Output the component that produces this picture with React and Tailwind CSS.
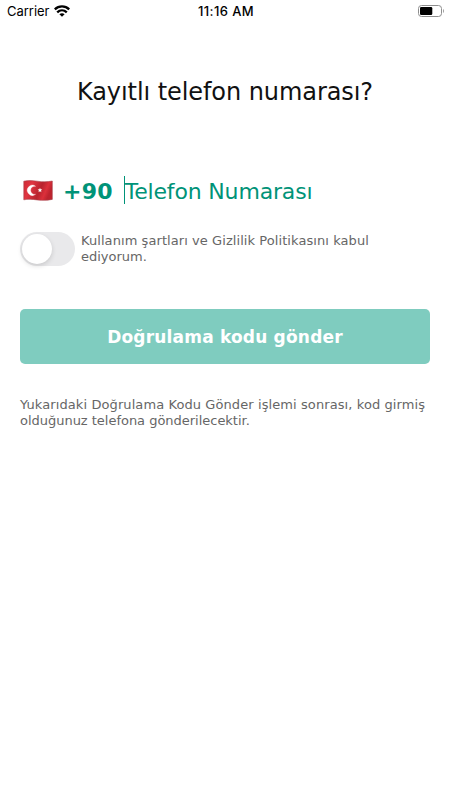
import React from 'react';

const WifiIcon = () => (
    <svg className="w-4 h-3" viewBox="0 0 16 12" fill="none" stroke="#000" strokeWidth="2.3">
        <path d="M0.8 4.4C4.8 0.4 11.2 0.4 15.2 4.4" />
        <path d="M3.2 7.4C6 4.7 10 4.7 12.8 7.4" />
        <path d="M8 11.8L5.4 9.3C6.9 7.9 9.1 7.9 10.6 9.3Z" fill="#000" stroke="none" />
    </svg>
);

const BatteryIcon = () => (
    <svg className="w-[27px] h-3" viewBox="0 0 27 12" fill="none">
        <rect x="0.5" y="0.5" width="23" height="11" rx="3" stroke="#8e8e8e" />
        <rect x="2" y="2" width="12.3" height="8" rx="1.3" fill="#000" />
        <path d="M25 4V8C26.2 7.6 26.2 4.4 25 4Z" fill="#8e8e8e" />
    </svg>
);

const TurkeyFlag = () => (
    <svg className="w-[30px] h-[22px]" viewBox="0 0 30 22">
        <defs>
            <linearGradient id="cloth" x1="0" x2="1" y1="0" y2="0.3">
                <stop offset="0" stopColor="#cf2a35" />
                <stop offset="0.3" stopColor="#e03642" />
                <stop offset="0.65" stopColor="#b8232e" />
                <stop offset="0.85" stopColor="#dc303b" />
                <stop offset="1" stopColor="#bd232e" />
            </linearGradient>
        </defs>
        <path
            d="M0.8 1.2C5 0.3 9 0.5 14 1.2C20 2.1 24 2 29.3 1V19.4C24 20.4 20 20.6 14 19.9C9 19.2 5 19 0.8 19.8Z"
            fill="url(#cloth)"
            stroke="#a6404a"
            strokeWidth="0.6"
        />
        <path
            d="M12.6 6.3A5.1 5.1 0 1 0 12.6 14.3A4.1 4.1 0 1 1 12.6 6.3Z"
            fill="#fff"
            stroke="#fff"
            strokeWidth="0.3"
        />
        <path
            d="M17 7.7L17.6 9.3L19.3 9.4L18 10.5L18.4 12.2L17 11.3L15.5 12.2L15.9 10.5L14.6 9.4L16.4 9.3Z"
            fill="#fff"
        />
    </svg>
);

const App = () => {
    return (
        <div className="min-h-screen bg-white font-['DejaVu_Sans',sans-serif]">
            {/* Status Bar */}
            <div className="grid grid-cols-3 items-center h-[22px] pl-[7px] pr-[5px] font-['Inter',sans-serif] text-black">
                <div className="flex items-center gap-[5px]">
                    <span className="pt-px text-[13px] tracking-[-0.02px]">Carrier</span>
                    <WifiIcon />
                </div>
                <span className="pt-px text-center text-[13px] font-medium tracking-[0.4px]">11:16 AM</span>
                <div className="flex justify-end">
                    <BatteryIcon />
                </div>
            </div>

            <div className="px-5">
                <h1 className="mt-[54px] text-center text-2xl tracking-[-0.07px] text-[#111] whitespace-nowrap">
                    Kayıtlı telefon numarası?
                </h1>

                {/* Phone Input */}
                <div className="flex items-center h-8 mt-[67px] pl-[3px] text-[#009378]">
                    <TurkeyFlag />
                    <span className="ml-[10px] text-[22px] font-bold tracking-[0.2px]">+90</span>
                    <span className="ml-[11px] mb-[2px] w-px h-7 bg-[#009378]" />
                    <span className="text-[22px] tracking-[-0.17px] whitespace-nowrap">Telefon Numarası</span>
                </div>

                {/* Terms Switch */}
                <div className="flex mt-[25px]">
                    <div className="w-[55px] h-[34px] p-[2px] shrink-0 rounded-full bg-[#e9e9eb]">
                        <div className="size-[30px] rounded-full bg-white shadow-[0_2px_5px_rgba(0,0,0,0.14)]" />
                    </div>
                    <p className="ml-[6px] mt-px text-[13px] leading-4 text-[#666] whitespace-nowrap">
                        <span className="tracking-[0.07px]">Kullanım şartları ve Gizlilik Politikasını kabul</span>
                        <br />
                        ediyorum.
                    </p>
                </div>

                <button className="block w-full h-[55px] pt-[2px] mt-[43px] rounded-[5px] bg-[#7fccbf] text-[17px] font-bold tracking-[0.19px] text-white">
                    Doğrulama kodu gönder
                </button>

                <p className="mt-[33px] text-[13px] leading-4 text-[#666] whitespace-nowrap">
                    <span className="tracking-[0.09px]">
                        Yukarıdaki Doğrulama Kodu Gönder işlemi sonrası, kod girmiş
                    </span>
                    <br />
                    <span className="tracking-[-0.02px]">olduğunuz telefona gönderilecektir.</span>
                </p>
            </div>
        </div>
    );
};

export default App;
